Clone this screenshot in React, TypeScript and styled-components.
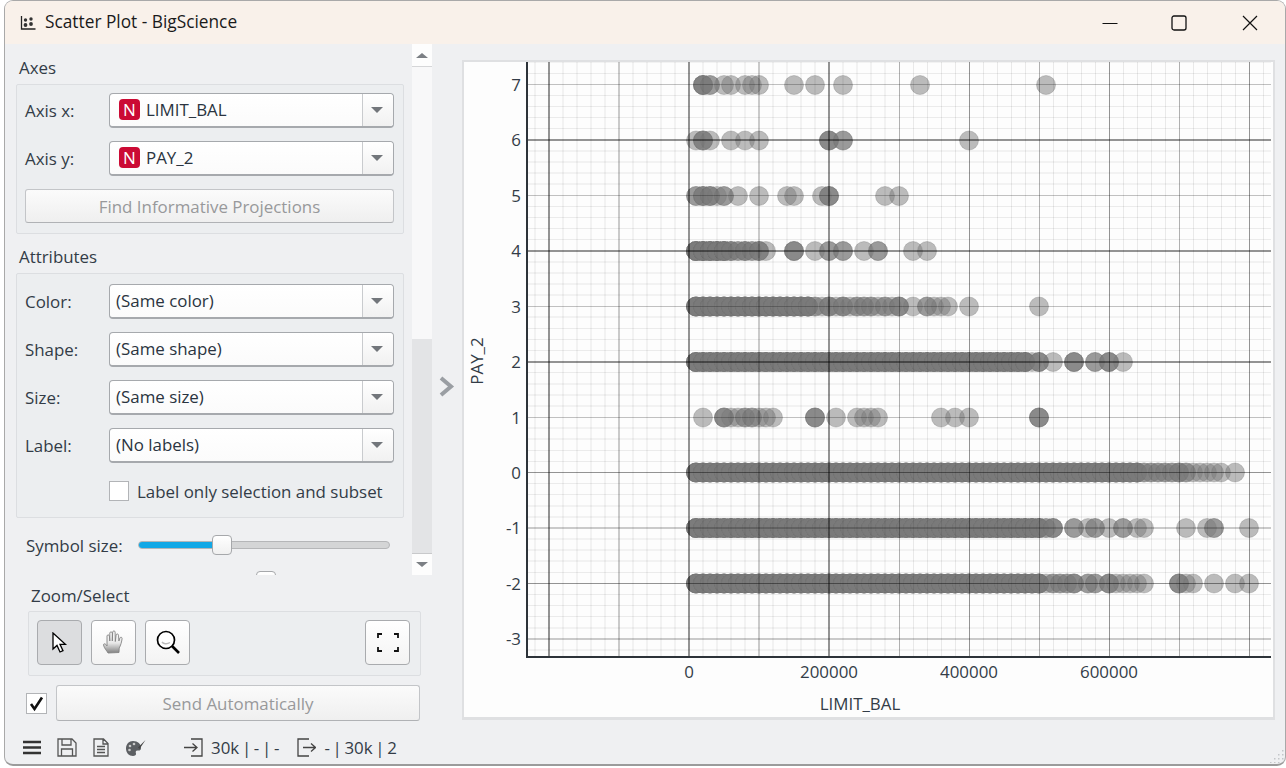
import React from 'react'
import styled, { createGlobalStyle } from 'styled-components'

const GlobalStyle = createGlobalStyle`
  html, body {
    margin: 0;
    padding: 0;
    background: #ffffff;
    overflow: hidden;
  }
  body {
    font-family: 'Open Sans', 'Liberation Sans', sans-serif;
    font-size: 16.9px;
    color: #333c47;
  }
  * {
    box-sizing: border-box;
  }
`

// limit_bal of the points, in units of 10k, one list per value of PAY_2
const range = (from: number, to: number) => {
  const out: number[] = []
  for (let i = from; i <= to; i++) out.push(i, i, i, i, i, i)
  return out
}

const rows: { y: number; xs: number[] }[] = [
  { y: 85, xs: [2, 2, 2, 2, 3, 3, 5, 6, 8, 9, 10, 15, 18, 22, 33, 51] },
  { y: 140.5, xs: [1, 2, 2, 2, 3, 6, 8, 10, 20, 20, 20, 22, 22, 40] },
  { y: 196, xs: [1, 1, 2, 2, 2, 3, 3, 3, 4, 5, 5, 7, 10, 14, 15, 19, 20, 20, 20, 28, 30] },
  { y: 251, xs: [...range(1, 5), 6, 6, 6, 7, 7, 8, 8, 8, 9, 9, 10, 10, 10, 11, 15, 15, 15, 18, 20, 20, 22, 22, 25, 27, 27, 32, 34] },
  { y: 306.5, xs: [...range(1, 17), 18, 18, 19, 20, 20, 20, 21, 22, 22, 22, 23, 24, 24, 25, 25, 26, 26, 27, 28, 28, 29, 30, 30, 30, 32, 34, 34, 35, 36, 37, 40, 50] },
  { y: 362, xs: [...range(1, 48), 49, 50, 50, 50, 52, 55, 55, 55, 58, 58, 60, 60, 60, 62] },
  { y: 417.5, xs: [2, 5, 5, 5, 6, 7, 8, 8, 9, 9, 10, 11, 12, 18, 18, 18, 21, 24, 25, 26, 27, 36, 38, 40, 50, 50, 50] },
  { y: 472.5, xs: [...range(1, 64), 65, 65, 66, 66, 67, 67, 68, 68, 69, 69, 70, 70, 70, 71, 71, 72, 73, 74, 75, 76, 78] },
  { y: 528, xs: [...range(1, 50), 51, 51, 52, 52, 52, 55, 55, 57, 58, 58, 60, 62, 62, 64, 65, 71, 74, 75, 75, 80] },
  { y: 583.5, xs: [...range(1, 50), 51, 52, 52, 53, 53, 54, 54, 55, 55, 55, 57, 57, 58, 58, 60, 60, 60, 61, 62, 63, 64, 65, 70, 70, 70, 71, 72, 75, 78, 80] },
]

const yMajors = [
  { v: 7, y: 84, w: 1, a: 0.24 },
  { v: 6, y: 139, w: 2, a: 0.42 },
  { v: 5, y: 195, w: 1, a: 0.24 },
  { v: 4, y: 250, w: 2, a: 0.42 },
  { v: 3, y: 306, w: 1, a: 0.24 },
  { v: 2, y: 361, w: 2, a: 0.42 },
  { v: 1, y: 417, w: 1, a: 0.24 },
  { v: 0, y: 472, w: 1, a: 0.42 },
  { v: -1, y: 527, w: 2, a: 0.2 },
  { v: -2, y: 583, w: 1, a: 0.42 },
  { v: -3, y: 638, w: 2, a: 0.2 },
]

const xTicks = [
  { label: '0', x: 689 },
  { label: '200000', x: 829 },
  { label: '400000', x: 969 },
  { label: '600000', x: 1109 },
]

const PLOT = { left: 527, top: 62, right: 1271, bottom: 657 }

const ScatterChart = () => {
  const vertical: React.ReactElement[] = []
  for (let k = -11; k <= 41; k++) {
    const x = 689 + 14 * k
    if (x < PLOT.left || x > PLOT.right) continue
    const major = k % 10 === 0
    const mid = k % 5 === 0
    const thick = x < 890
    const a = major ? 0.42 : mid ? (thick ? 0.2 : 0.3) : thick ? 0.045 : 0.08
    vertical.push(
      <rect key={k} x={thick ? x - 1 : x} y={PLOT.top} width={thick ? 2 : 1} height={PLOT.bottom - PLOT.top} fill="#000" fillOpacity={a} />,
    )
  }

  const horizontal: React.ReactElement[] = []
  for (let k = -17; k <= 37; k++) {
    if (k % 5 === 0) continue
    const y = 472.5 - 11.09 * k
    if (y < PLOT.top || y > PLOT.bottom) continue
    const frac = y - Math.floor(y)
    const thin = frac > 0.25 && frac < 0.75
    horizontal.push(
      <rect key={k} x={PLOT.left} y={thin ? Math.floor(y) : Math.round(y) - 1} width={PLOT.right - PLOT.left} height={thin ? 1 : 2} fill="#000" fillOpacity={thin ? 0.07 : 0.045} />,
    )
  }

  return (
    <ChartSvg viewBox="464 62 809 655">
      {rows.map(row =>
        row.xs.map((v, i) => (
          <circle key={`${row.y}-${i}`} cx={689 + 7 * v} cy={row.y} r={9.5} fill="#7a7a7a" fillOpacity={0.5} stroke="#747474" strokeOpacity={0.3} />
        )),
      )}
      <g shapeRendering="crispEdges">
        {vertical}
        {horizontal}
        {yMajors.map(l => (
          <rect key={l.v} x={PLOT.left} y={l.y} width={PLOT.right - PLOT.left} height={l.w} fill="#000" fillOpacity={l.a} />
        ))}
        <rect x={526} y={PLOT.top} width={2} height={PLOT.bottom - PLOT.top + 1} fill="#2d3339" />
        <rect x={526} y={656} width={PLOT.right - 526} height={2} fill="#2d3339" />
      </g>
      {yMajors.map(l => (
        <TickText key={l.v} x={521} y={l.y + 6.5} textAnchor="end">
          {l.v}
        </TickText>
      ))}
      {xTicks.map(t => (
        <TickText key={t.label} x={t.x} y={678} textAnchor="middle">
          {t.label}
        </TickText>
      ))}
      <TickText x={860} y={710} textAnchor="middle">
        LIMIT_BAL
      </TickText>
      <TickText x={483} y={361} textAnchor="middle" transform="rotate(-90 483 361)">
        PAY_2
      </TickText>
    </ChartSvg>
  )
}

type ComboProps = {
  label: string
  value: string
  numeric?: boolean
}

const ComboRow = ({ label, value, numeric }: ComboProps) => (
  <Row>
    <RowLabel>{label}</RowLabel>
    <Combo>
      <ComboValue>
        {numeric && <TypeBadge>N</TypeBadge>}
        {value}
      </ComboValue>
      <ComboArrow>
        <Triangle />
      </ComboArrow>
    </Combo>
  </Row>
)

const App = () => {
  return (
    <>
      <GlobalStyle />
      <Window>
        <TitleBar>
          <TitleIcon viewBox="0 0 16 16" width="16" height="16">
            <path d="M1.500 1v13h14" fill="none" stroke="#222" strokeWidth="1.300" />
            <circle cx="5.500" cy="5" r="1.700" fill="#333" />
            <circle cx="11" cy="4" r="1.700" fill="#333" />
            <circle cx="5.500" cy="10" r="1.900" fill="#333" />
            <circle cx="11" cy="9" r="1.900" fill="#333" />
          </TitleIcon>
          <TitleText>Scatter Plot - BigScience</TitleText>
          <WindowControls>
            <WindowControl>
              <svg width="16" height="16" viewBox="0 0 16 16">
                <path d="M0.500 8.500h15" stroke="#111" strokeWidth="1" />
              </svg>
            </WindowControl>
            <WindowControl>
              <svg width="16" height="16" viewBox="0 0 16 16">
                <rect x="1" y="1" width="14" height="14" rx="2" fill="none" stroke="#111" strokeWidth="1.300" />
              </svg>
            </WindowControl>
            <WindowControl>
              <svg width="16" height="16" viewBox="0 0 16 16">
                <path d="M1 1l14 14M15 1L1 15" stroke="#111" strokeWidth="1.200" />
              </svg>
            </WindowControl>
          </WindowControls>
        </TitleBar>

        <Main>
          <LeftPanel>
            <ScrollArea>
              <ScrollContent>
                <SectionTitle $top={12}>Axes</SectionTitle>
                <GroupBox>
                  <ComboRow label="Axis x:" value="LIMIT_BAL" numeric />
                  <ComboRow label="Axis y:" value="PAY_2" numeric />
                  <WideButton $height={34}>Find Informative Projections</WideButton>
                </GroupBox>

                <SectionTitle $top={11}>Attributes</SectionTitle>
                <GroupBox $tall>
                  <ComboRow label="Color:" value="(Same color)" />
                  <ComboRow label="Shape:" value="(Same shape)" />
                  <ComboRow label="Size:" value="(Same size)" />
                  <ComboRow label="Label:" value="(No labels)" />
                  <CheckRow>
                    <CheckBox />
                    Label only selection and subset
                  </CheckRow>
                </GroupBox>

                <SliderRow $top={15}>
                  <SliderLabel>Symbol size:</SliderLabel>
                  <Track>
                    <TrackFill style={{ width: 74 }} />
                    <Thumb style={{ left: 73 }} />
                  </Track>
                </SliderRow>
                <SliderRow $top={12}>
                  <SliderLabel />
                  <Track>
                    <TrackFill style={{ width: 118 }} />
                    <Thumb style={{ left: 117 }} />
                  </Track>
                </SliderRow>
              </ScrollContent>
              <ScrollBar>
                <ScrollArrow>
                  <ArrowGlyph $up />
                </ScrollArrow>
                <ScrollUpper />
                <ScrollThumb />
                <ScrollArrow $bottom>
                  <ArrowGlyph />
                </ScrollArrow>
              </ScrollBar>
            </ScrollArea>

            <ZoomTitle>Zoom/Select</ZoomTitle>
            <ZoomGroup>
              <ToolButton $active>
                <svg width="16" height="22" viewBox="0 0 16 22">
                  <path d="M1 1v16l4-3.600 3 6.600 3-1.300-3-6.400h5.400z" fill="#fff" stroke="#000" strokeWidth="1.300" strokeLinejoin="miter" />
                </svg>
              </ToolButton>
              <ToolButton>
                <svg width="24" height="25" viewBox="0 0 24 25">
                  <defs>
                    <linearGradient id="palm" x1="0" y1="0" x2="0" y2="1">
                      <stop offset="0" stopColor="#ffffff" />
                      <stop offset="0.550" stopColor="#e8e8e8" />
                      <stop offset="1" stopColor="#808080" />
                    </linearGradient>
                  </defs>
                  <path
                    d="M6 23c-1-2-4-5-4.500-8-.2-1.300 1.500-1.600 2.300-.6L5 16V6c0-1.500 2.300-1.500 2.400 0l.4 5V3c0-1.500 2.400-1.500 2.500 0v8l.4-9c.1-1.500 2.400-1.400 2.400 0l.2 9.500.8-6.500c.2-1.500 2.400-1.300 2.400.2l.4 5.800 1-3c.5-1.300 2.400-.8 2.200.6-.4 3-1.400 7-2.900 9.400l-.2 4.500z"
                    fill="url(#palm)"
                    stroke="#858585"
                    strokeWidth="0.900"
                  />
                </svg>
              </ToolButton>
              <ToolButton>
                <svg width="24" height="25" viewBox="0 0 24 25">
                  <circle cx="10" cy="10" r="8.500" fill="#fff" stroke="#000" strokeWidth="1.700" />
                  <path d="M6 12c1.500 2 5 2.500 8 .5" fill="none" stroke="#bbb" strokeWidth="1.500" />
                  <path d="M16 16l7 7" stroke="#000" strokeWidth="2.600" />
                </svg>
              </ToolButton>
              <ToolSpacer />
              <ToolButton>
                <svg width="22" height="19" viewBox="0 0 22 19">
                  <path d="M1 5V1h4M17 1h4v4M21 14v4h-4M5 18H1v-4" fill="none" stroke="#111" strokeWidth="1.800" />
                </svg>
              </ToolButton>
            </ZoomGroup>

            <SendRow>
              <SendCheck>
                <svg width="17" height="17" viewBox="0 0 17 17">
                  <path d="M3 9l3.500 5L14 2.500" fill="none" stroke="#111" strokeWidth="2.600" />
                </svg>
              </SendCheck>
              <WideButton $height={36}>Send Automatically</WideButton>
            </SendRow>

            <StatusBar>
              <StatusIcons>
                <svg width="18" height="15" viewBox="0 0 18 15">
                  <path d="M0 2h18M0 7.500h18M0 13h18" stroke="#333" strokeWidth="2.400" />
                </svg>
                <svg width="20" height="19" viewBox="0 0 20 19">
                  <path d="M1 1h14l4 4v13H1z M5 1v6h9V1 M4.500 18v-7h11v7" fill="none" stroke="#555" strokeWidth="1.300" />
                </svg>
                <svg width="16" height="19" viewBox="0 0 16 19">
                  <path d="M1 1h9.500L15 5.500V18H1z M10 1v5h5 M4 8.500h8 M4 11.500h8 M4 14.500h8" fill="none" stroke="#555" strokeWidth="1.300" />
                </svg>
                <svg width="21" height="18" viewBox="0 0 21 18">
                  <path d="M8 2c5 0 8 3 8 7 0 3-2 2.500-3.500 2.500-2 0-2 1.500-1.500 3 .4 1.500-1 2.500-3 2.500-4 0-7-3-7-7.500S4 2 8 2z" fill="#5c5f63" />
                  <circle cx="5" cy="7" r="1.300" fill="#c9c9c9" />
                  <circle cx="9" cy="5" r="1.300" fill="#c9c9c9" />
                  <circle cx="4.500" cy="11" r="1.300" fill="#c9c9c9" />
                  <path d="M20.500 1L13 8.500l1.500 1.500z" fill="#444" />
                </svg>
              </StatusIcons>
              <StatusSummary $left={38}>
                <svg width="19" height="19" viewBox="0 0 19 19">
                  <path d="M7 1h11v17H7M0 9.500h12M8.500 5.500l4.500 4-4.500 4" fill="none" stroke="#444" strokeWidth="1.300" />
                </svg>
                30k | - | -
              </StatusSummary>
              <StatusSummary $left={18}>
                <svg width="19" height="19" viewBox="0 0 19 19">
                  <path d="M12 1H1v17h11M6 9.500h12M14 5.500l4.500 4-4.500 4" fill="none" stroke="#444" strokeWidth="1.300" />
                </svg>
                - | 30k | 2
              </StatusSummary>
            </StatusBar>
          </LeftPanel>

          <Splitter>
            <svg width="17" height="21" viewBox="0 0 17 21">
              <path d="M3 2l10 8.500L3 19" fill="none" stroke="#9a9ea3" strokeWidth="4" />
            </svg>
          </Splitter>

          <PlotFrame>
            <ScatterChart />
          </PlotFrame>
        </Main>

        <Grip viewBox="0 0 15 14" width="15" height="14">
          {[
            [13, 1],
            [13, 5],
            [9, 5],
            [13, 9],
            [9, 9],
            [5, 9],
            [13, 13],
            [9, 13],
            [5, 13],
            [1, 13],
          ].map(([x, y]) => (
            <rect key={`${x}-${y}`} x={x} y={y} width="1.500" height="1.500" fill="#c4c6c9" />
          ))}
        </Grip>
      </Window>
    </>
  )
}

export default App

const Window = styled.div`
  position: relative;
  display: flex;
  flex-direction: column;
  width: 1282px;
  height: 766px;
  margin-left: 4px;
  background: #eff0f2;
  border: 1px solid #a9a9a9;
  border-bottom: 2px solid #9b9b9b;
  border-radius: 9px;
  overflow: hidden;
`

const TitleBar = styled.div`
  display: flex;
  align-items: center;
  flex: 0 0 43px;
  padding-left: 15px;
  background: #f9f1ea;
`

const TitleIcon = styled.svg`
  flex: none;
`

const TitleText = styled.div`
  margin-left: 9px;
  padding-bottom: 2px;
  font-size: 17.3px;
  color: #1a1a1a;
`

const WindowControls = styled.div`
  display: flex;
  margin-left: auto;
`

const WindowControl = styled.div`
  display: flex;
  align-items: center;
  justify-content: center;
  width: 71px;
  height: 43px;

  &:first-child {
    padding-left: 4px;
  }
`

const Main = styled.div`
  display: flex;
  flex: 1;
  min-height: 0;
`

const LeftPanel = styled.div`
  display: flex;
  flex-direction: column;
  flex: 0 0 427px;
`

const ScrollArea = styled.div`
  display: flex;
  flex: 0 0 531px;
  overflow: hidden;
`

const ScrollContent = styled.div`
  flex: 0 0 407px;
  padding: 0 8px 0 11px;
  overflow: hidden;
`

const SectionTitle = styled.div<{ $top: number }>`
  height: 24px;
  margin-top: ${({ $top }) => $top}px;
  margin-bottom: 4px;
  padding-left: 3px;
  line-height: 24px;
`

const GroupBox = styled.div<{ $tall?: boolean }>`
  display: flex;
  flex-direction: column;
  gap: 14px;
  height: ${({ $tall }) => ($tall ? 245 : 150)}px;
  padding: ${({ $tall }) => ($tall ? 10 : 8)}px 9px 0 8px;
  background: #eceef0;
  border: 1px solid #dcdee1;
  border-radius: 2px;
`

const Row = styled.div`
  display: flex;
  align-items: center;
  height: 34px;
`

const RowLabel = styled.div`
  flex: 0 0 84px;
`

const Combo = styled.div`
  display: flex;
  flex: 1;
  height: 35px;
  background: linear-gradient(#ffffff, #fbfbfb);
  border: 1px solid #a6a9ad;
  border-bottom-width: 2px;
  border-radius: 4px;
`

const ComboValue = styled.div`
  display: flex;
  align-items: center;
  flex: 1;
  padding-left: 6px;
  color: #2a3440;
`

const TypeBadge = styled.span`
  display: flex;
  align-items: center;
  justify-content: center;
  width: 21px;
  height: 21px;
  margin: 0 6px 0 3px;
  background: #cb0a34;
  border-radius: 4px;
  color: #ffffff;
  font-size: 17px;
`

const ComboArrow = styled.div`
  display: flex;
  align-items: center;
  justify-content: center;
  flex: 0 0 31px;
  padding-right: 3px;
  background: linear-gradient(#ffffff, #f1f1f1);
  border-left: 1px solid #c9cbce;
  border-radius: 0 4px 4px 0;
`

const Triangle = styled.div`
  width: 0;
  height: 0;
  border-left: 6px solid transparent;
  border-right: 6px solid transparent;
  border-top: 6px solid #72767b;
`

const WideButton = styled.div<{ $height: number }>`
  display: flex;
  align-items: center;
  justify-content: center;
  flex: 1;
  min-height: ${({ $height }) => $height}px;
  max-height: ${({ $height }) => $height}px;
  background: linear-gradient(#fbfbfb, #efefef);
  border: 1px solid #c3c5c8;
  border-bottom-color: #b0b2b5;
  border-radius: 3px;
  color: #98999b;
`

const CheckRow = styled.div`
  display: flex;
  align-items: center;
  gap: 8px;
  height: 20px;
  margin: 5px 0 0 84px;
  white-space: nowrap;
`

const CheckBox = styled.div`
  flex: none;
  width: 20px;
  height: 20px;
  background: #ffffff;
  border: 1px solid #b2b4b7;
`

const SliderRow = styled.div<{ $top: number }>`
  display: flex;
  align-items: center;
  height: 24px;
  margin-top: ${({ $top }) => $top}px;
  padding-left: 10px;
`

const SliderLabel = styled.div`
  flex: 0 0 112px;
`

const Track = styled.div`
  position: relative;
  width: 252px;
  height: 8px;
  background: #d4d5d6;
  border: 1px solid #b5b6b8;
  border-radius: 4px;
`

const TrackFill = styled.div`
  height: 100%;
  background: #12a8e6;
  border-radius: 4px 0 0 4px;
`

const Thumb = styled.div`
  position: absolute;
  top: -7px;
  width: 20px;
  height: 20px;
  background: linear-gradient(#ffffff, #f0f0f0);
  border: 1px solid #a6a8ab;
  border-radius: 4px;
`

const ScrollBar = styled.div`
  display: flex;
  flex-direction: column;
  flex: 0 0 20px;
`

const ScrollArrow = styled.div<{ $bottom?: boolean }>`
  display: flex;
  align-items: center;
  justify-content: center;
  flex: 0 0 ${({ $bottom }) => ($bottom ? 21 : 23)}px;
  background: #fdfdfd;
  border-bottom: ${({ $bottom }) => ($bottom ? 'none' : '1px solid #d5d6d8')};
`

const ArrowGlyph = styled.div<{ $up?: boolean }>`
  width: 0;
  height: 0;
  border-left: 6px solid transparent;
  border-right: 6px solid transparent;
  border-top: ${({ $up }) => ($up ? 'none' : '5px solid #7b7f84')};
  border-bottom: ${({ $up }) => ($up ? '5px solid #7b7f84' : 'none')};
`

const ScrollUpper = styled.div`
  flex: 0 0 272px;
  background: #f8f8f9;
`

const ScrollThumb = styled.div`
  flex: 1;
  background: #e3e4e6;
  border-bottom: 1px solid #c8c9cb;
`

const ZoomTitle = styled.div`
  height: 24px;
  margin: 9px 0 3px 26px;
  line-height: 24px;
`

const ZoomGroup = styled.div`
  display: flex;
  gap: 9px;
  height: 65px;
  width: 393px;
  margin-left: 23px;
  padding: 8px 10px 0 8px;
  background: #eceef0;
  border: 1px solid #dcdee1;
  border-radius: 2px;
`

const ToolButton = styled.div<{ $active?: boolean }>`
  display: flex;
  align-items: center;
  justify-content: center;
  flex: 0 0 45px;
  height: 45px;
  background: ${({ $active }) => ($active ? '#dcdddf' : 'linear-gradient(#ffffff, #f3f3f3)')};
  border: 1px solid #a9abae;
  border-radius: 4px;
`

const ToolSpacer = styled.div`
  flex: 1;
`

const SendRow = styled.div`
  display: flex;
  align-items: center;
  gap: 9px;
  width: 394px;
  height: 36px;
  margin: 9px 0 0 21px;
`

const SendCheck = styled.div`
  display: flex;
  align-items: center;
  justify-content: center;
  flex: 0 0 21px;
  height: 21px;
  background: #ffffff;
  border: 1px solid #b2b4b7;
`

const StatusBar = styled.div`
  display: flex;
  align-items: center;
  height: 25px;
  margin-top: 14px;
  padding-left: 18px;
  white-space: nowrap;
  word-spacing: -1.7px;
`

const StatusIcons = styled.div`
  display: flex;
  align-items: center;
  gap: 16px;
`

const StatusSummary = styled.div<{ $left: number }>`
  display: flex;
  align-items: center;
  gap: 8px;
  margin-left: ${({ $left }) => $left}px;
`

const Splitter = styled.div`
  display: flex;
  align-items: center;
  justify-content: center;
  flex: 0 0 30px;
  height: 684px;
  padding-right: 1px;
`

const PlotFrame = styled.div`
  flex: 0 0 813px;
  height: 660px;
  margin-top: 16px;
  background: #fdfdfd;
  border: 2px solid #dfe0e2;
  border-bottom-width: 3px;
`

const ChartSvg = styled.svg`
  display: block;
  width: 809px;
  height: 655px;
`

const TickText = styled.text`
  font-family: 'Open Sans', 'Liberation Sans', sans-serif;
  font-size: 16.9px;
  fill: #333c47;
`

const Grip = styled.svg`
  position: absolute;
  right: 1px;
  bottom: 1px;
`
